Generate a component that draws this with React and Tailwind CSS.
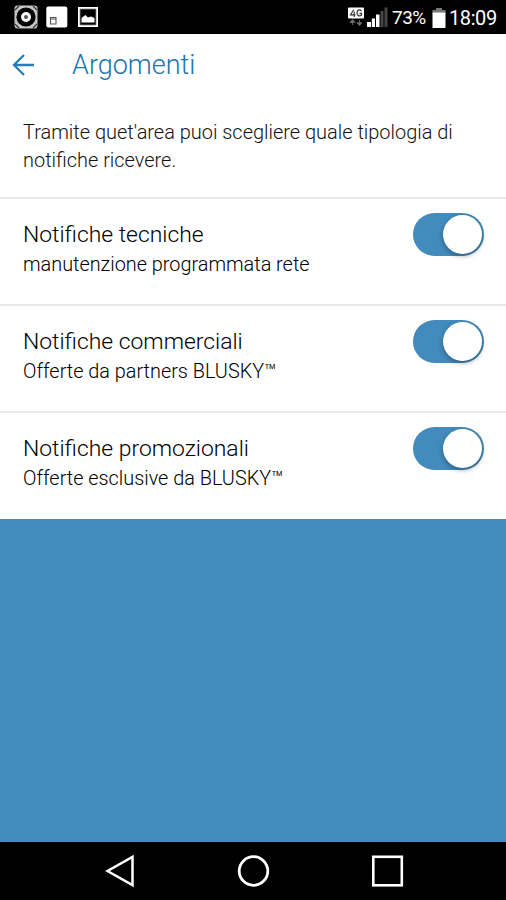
const topics = [
  { title: "Notifiche tecniche", detail: "manutenzione programmata rete", height: "h-[107px]" },
  { title: "Notifiche commerciali", detail: "Offerte da partners BLUSKY™", height: "h-[107px]" },
  { title: "Notifiche promozionali", detail: "Offerte esclusive da BLUSKY™", height: "h-[107.500px]" },
];

function StatusBar() {
  return (
    <div className="flex h-[34px] shrink-0 items-center bg-black text-white">
      <svg className="ml-[14px] shrink-0" width="24" height="24" viewBox="0 0 24 24">
        <rect x="0.5" y="0.5" width="23" height="23" rx="3" fill="#c4c4c4" />
        <circle cx="12" cy="12" r="9.6" fill="#000" />
        <circle cx="12" cy="12" r="5" fill="#fff" />
        <circle cx="12" cy="12" r="2" fill="#555" />
        <path d="M1 5l4-4M19 1l4 4M1 19l4 4M19 23l4-4" stroke="#333" strokeWidth="1.2" />
      </svg>
      <svg className="ml-[8px] shrink-0" width="22" height="24" viewBox="0 0 22 24">
        <rect x="0.3" y="1.5" width="21" height="21" rx="2" fill="#fff" />
        <path d="M4.500 12.500h5.500v6.500H4.500zM4.500 14h5.500" fill="none" stroke="#555" strokeWidth="1.1" />
      </svg>
      <svg className="ml-[10px] shrink-0" width="20" height="22" viewBox="0 0 20 22">
        <rect x="1" y="2" width="18" height="18" fill="#000" stroke="#fff" strokeWidth="2" />
        <path d="M2 3h16v16H2z" fill="none" stroke="#888" strokeWidth="0.8" />
        <path d="M3.500 12l4-3 2.500 2.500 3-1 3.500 1.500v4.500h-13z" fill="#fff" />
      </svg>
      <div className="flex-1" />
      <svg className="shrink-0" width="18" height="22" viewBox="0 0 18 22">
        <rect x="0" y="1.500" width="16" height="11" rx="1" fill="#fff" />
        <path d="M5.700 3.700L2.500 8.800h5M6.200 5.500v5.500M13.500 5c-2-2.200-4.500-.8-4.500 2s2.500 3.600 4.500 2V7.300h-2" fill="none" stroke="#333" strokeWidth="1.2" />
        <path d="M4.500 19v-5M2 16.500h5L4.500 13.500zM11.500 14v5M9 16.800h5l-2.500 3z" fill="#666" stroke="#666" strokeWidth="1" />
      </svg>
      <svg className="ml-[1px] shrink-0" width="21" height="22" viewBox="0 0 21 22">
        <path d="M0 16h4v5H0zM4.800 12.500h3.200v8.500H4.800zM9 8.500h3.500v12.500H9z" fill="#fff" />
        <path d="M13.500 5h3v16h-3zM17.500 1.500h3v19.500h-3z" fill="#444" />
      </svg>
      <span className="ml-[4px] w-[35px] shrink-0 whitespace-nowrap pt-[2px] text-[19px] leading-[24px] tracking-[-0.500px]">73%</span>
      <svg className="ml-[5px] mt-[1px] shrink-0" width="14" height="20" viewBox="0 0 14 20">
        <path d="M4 0h6v2h3.500v4H.5V2H4z" fill="#777" />
        <path d="M.5 4.500h13V20H.5z" fill="#fff" />
      </svg>
      <span className="ml-[3px] mr-[8px] w-[49px] shrink-0 whitespace-nowrap pt-[2px] text-[20px] leading-[24px] tracking-[-0.400px]">18:09</span>
    </div>
  );
}

function Toggle() {
  return (
    <button
      role="switch"
      aria-checked="true"
      className="mr-[22px] mt-[14px] flex h-[43px] w-[71.500px] shrink-0 items-center justify-end rounded-full bg-[#428bbc] pr-[2px]"
    >
      <span className="size-[39px] rounded-full bg-white shadow-[0_2px_5px_rgba(0,0,0,0.35)]" />
    </button>
  );
}

function TopicRow({ title, detail, height }) {
  return (
    <li className={`flex items-start justify-between border-t-2 border-[#e8e8e8] ${height}`}>
      <div className="pl-[23px] pt-[21px]">
        <h2 className="whitespace-nowrap text-[22.900px] font-light leading-[30px] text-black">{title}</h2>
        <p className="whitespace-nowrap text-[19.850px] font-light leading-[29px] text-black">{detail}</p>
      </div>
      <Toggle />
    </li>
  );
}

export default function App() {
  return (
    <div className="flex h-[900px] w-[506px] flex-col overflow-hidden bg-[#428bbc] font-['Roboto',sans-serif]">
      <StatusBar />
      <main className="bg-white">
        <header className="flex h-[62px] items-center pl-[12px] text-[#2a7db4]">
          <svg className="shrink-0" width="24" height="24" viewBox="0 0 24 24" fill="none" stroke="currentColor" strokeWidth="2.300">
            <path d="M22 12H2M12 2L2 12l10 10" />
          </svg>
          <h1 className="ml-[36px] text-[27px] font-light leading-[32px] text-[#1c74ae]">Argomenti</h1>
        </header>
        <p className="h-[101px] whitespace-nowrap pl-[23px] pt-[22px] text-[19.950px] font-light leading-[28px] text-[#111]">
          Tramite quet'area puoi scegliere quale tipologia di
          <br />
          notifiche ricevere.
        </p>
        <ul>
          {topics.map((topic) => (
            <TopicRow key={topic.title} {...topic} />
          ))}
        </ul>
      </main>
      <nav className="mt-auto flex h-[58px] shrink-0 items-center bg-black">
        <svg className="ml-[105px]" width="30" height="34" viewBox="0 0 30 34" fill="none" stroke="#fff" strokeWidth="2.500">
          <path d="M27.500 3v28L2.500 17z" />
        </svg>
        <svg className="ml-[102px]" width="34" height="34" viewBox="0 0 34 34" fill="none" stroke="#fff" strokeWidth="2.800">
          <circle cx="16.500" cy="17" r="14.300" />
        </svg>
        <svg className="ml-[100px]" width="34" height="34" viewBox="0 0 34 34" fill="none" stroke="#fff" strokeWidth="2.600">
          <rect x="2.300" y="2.800" width="28.500" height="28.500" />
        </svg>
      </nav>
    </div>
  );
}
